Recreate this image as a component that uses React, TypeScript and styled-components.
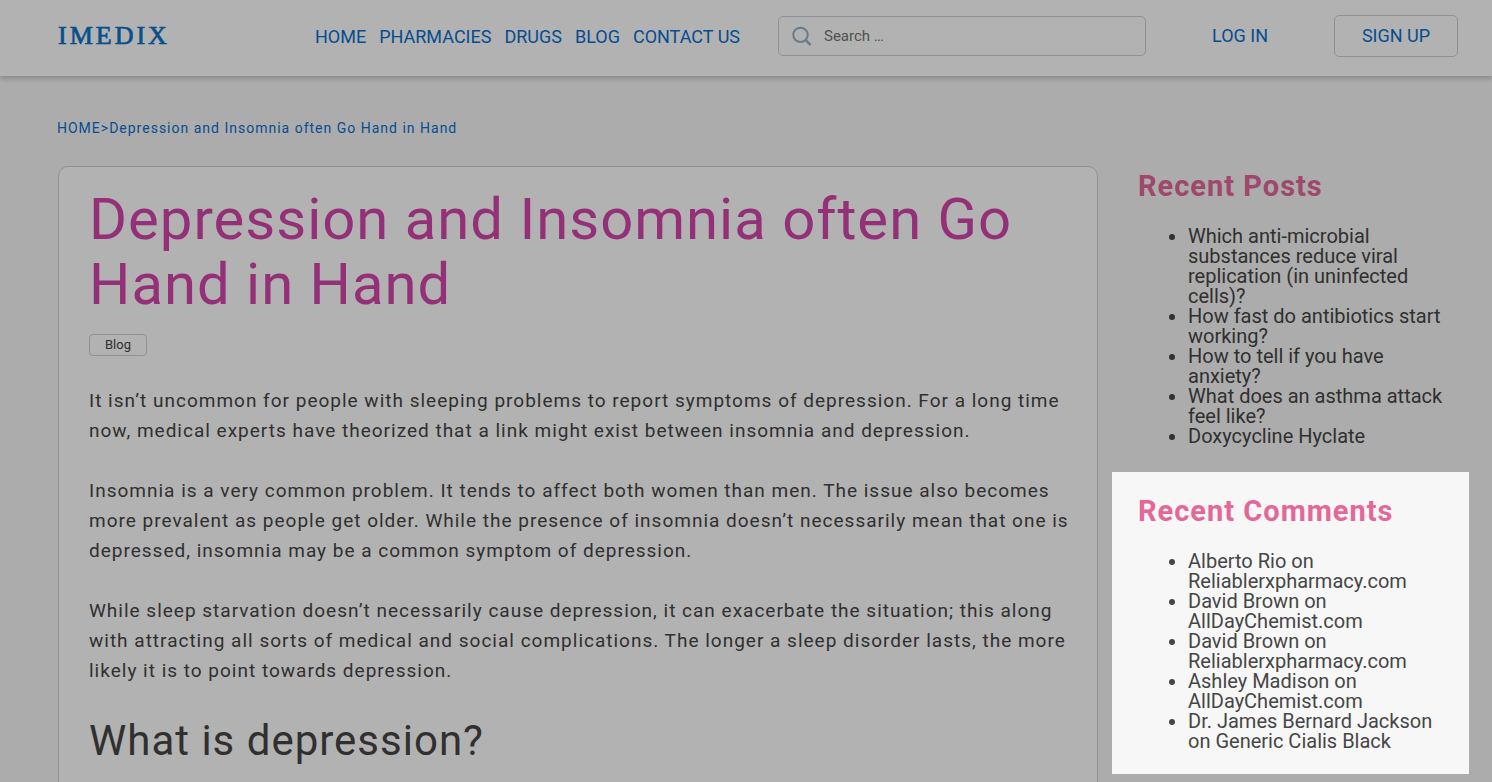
import React from "react";
import styled, { createGlobalStyle } from "styled-components";

const GlobalStyle = createGlobalStyle`
  *, *::before, *::after { box-sizing: border-box; }
  body {
    margin: 0;
    background: #f7f7f7;
    color: #464646;
    font-family: Roboto, "Liberation Sans", sans-serif;
    font-size: 20px;
    overflow: hidden;
  }
  a { color: inherit; text-decoration: none; }
`;

const Page = styled.div`
  min-height: 100vh;
`;

const Header = styled.header`
  display: flex;
  align-items: center;
  height: 76px;
  padding: 0 34px 4px 57px;
  background: #fff;
  box-shadow: 0 3px 5px rgba(0, 0, 0, 0.2);
  color: #0a6fd0;
`;

const Logo = styled.a`
  display: flex;
  width: 258px;
  flex: none;
`;

const Nav = styled.nav`
  display: flex;
  gap: 13px;
  flex: none;
  margin-right: 38px;
  padding-top: 2px;
  font-size: 18px;
  line-height: 22px;
`;

const SearchBox = styled.label`
  display: flex;
  align-items: center;
  gap: 12px;
  flex: 1;
  height: 40px;
  padding: 0 13px;
  border: 1px solid #cdcfdd;
  border-radius: 5px;
`;

const SearchInput = styled.input`
  flex: 1;
  min-width: 0;
  padding: 0;
  border: 0;
  outline: 0;
  background: transparent;
  font: 15px/20px Roboto, "Liberation Sans", sans-serif;
  color: #464646;
  &::placeholder { color: #757575; opacity: 1; }
`;

const AuthLinks = styled.div`
  display: flex;
  flex: none;
  gap: 32px;
  margin-left: 32px;
`;

const AuthButton = styled.button<{ $outlined?: boolean }>`
  height: 42px;
  min-width: 124px;
  padding: 0 25px;
  border: 1px solid ${(p) => (p.$outlined ? "#cdcfdd" : "transparent")};
  border-radius: 5px;
  background: transparent;
  color: inherit;
  font: 18px/22px Roboto, "Liberation Sans", sans-serif;
`;

const Breadcrumb = styled.nav`
  padding: 42px 57px 28px;
  font-size: 14px;
  line-height: 20px;
  letter-spacing: 1px;
  color: #0a6fd0;
`;

const Columns = styled.div`
  display: grid;
  grid-template-columns: minmax(0, 1fr) 357px;
  gap: 14px;
  padding: 0 23px 0 58px;
`;

const Article = styled.article`
  padding: 20px 24px 60px 30px;
  border: 1px solid #cdcfdd;
  border-radius: 10px;
  background: #fff;
  letter-spacing: 1px;
`;

const Title = styled.h1`
  margin: 0 0 17px;
  font-size: 58px;
  font-weight: 400;
  line-height: 65px;
  color: #d345ab;
`;

const Tag = styled.a`
  display: block;
  width: fit-content;
  padding: 0 15px;
  border: 1px solid #cdcfdd;
  border-radius: 4px;
  font-size: 13px;
  line-height: 20px;
  letter-spacing: normal;
`;

const Paragraph = styled.p`
  margin: 30px 0;
  font-size: 19px;
  line-height: 30px;
`;

const Subtitle = styled.h2`
  margin: 0;
  font-size: 42px;
  font-weight: 400;
  line-height: 50px;
`;

const Sidebar = styled.aside`
  display: flex;
  flex-direction: column;
`;

const Widget = styled.section<{ $spotlight?: boolean }>`
  position: relative;
  padding: ${(p) => (p.$spotlight ? "21px 26px 23px" : "2px 26px 26px")};
  /* the spread dims everything outside the highlighted widget */
  box-shadow: ${(p) => (p.$spotlight ? "0 0 0 3000px rgba(0, 0, 0, 0.3)" : "none")};
`;

const WidgetTitle = styled.h3`
  margin: 0 0 22px;
  font-size: 29px;
  font-weight: 700;
  line-height: 36px;
  letter-spacing: 1px;
  color: #e4679a;
`;

const List = styled.ul`
  margin: 0;
  padding: 0 0 0 50px;
  line-height: 20px;
`;

const navItems = ["HOME", "PHARMACIES", "DRUGS", "BLOG", "CONTACT US"];

const posts = [
  "Which anti-microbial substances reduce viral replication (in uninfected cells)?",
  "How fast do antibiotics start working?",
  "How to tell if you have anxiety?",
  "What does an asthma attack feel like?",
  "Doxycycline Hyclate",
];

const comments = [
  { author: "Alberto Rio", target: "Reliablerxpharmacy.com" },
  { author: "David Brown", target: "AllDayChemist.com" },
  { author: "David Brown", target: "Reliablerxpharmacy.com" },
  { author: "Ashley Madison", target: "AllDayChemist.com" },
  { author: "Dr. James Bernard Jackson", target: "Generic Cialis Black" },
];

const paragraphs = [
  "It isn’t uncommon for people with sleeping problems to report symptoms of depression. For a long time now, medical experts have theorized that a link might exist between insomnia and depression.",
  "Insomnia is a very common problem. It tends to affect both women than men. The issue also becomes more prevalent as people get older. While the presence of insomnia doesn’t necessarily mean that one is depressed, insomnia may be a common symptom of depression.",
  "While sleep starvation doesn’t necessarily cause depression, it can exacerbate the situation; this along with attracting all sorts of medical and social complications. The longer a sleep disorder lasts, the more likely it is to point towards depression.",
];

export default function App() {
  return (
    <>
      <GlobalStyle />
      <Page>
        <Header>
          <Logo href="#" aria-label="IMEDIX home">
            <svg width="120" height="32" viewBox="0 0 120 32">
              <text
                x="1"
                y="24"
                fontFamily="Liberation Serif, serif"
                fontSize="26"
                letterSpacing="3"
                fill="#0a74c8"
                stroke="#0a74c8"
                strokeWidth="0.7"
              >
                IMEDIX
              </text>
            </svg>
          </Logo>
          <Nav aria-label="Main">
            {navItems.map((item) => (
              <a key={item} href="#">{item}</a>
            ))}
          </Nav>
          <SearchBox>
            <svg width="20" height="20" viewBox="0 0 20 20" fill="none" stroke="#9bb0c4" strokeWidth="2">
              <circle cx="8.5" cy="8.9" r="7.2" />
              <path d="M13.4 13.8 L18.6 19" strokeWidth="2.6" />
            </svg>
            <SearchInput type="search" placeholder="Search …" aria-label="Search" />
          </SearchBox>
          <AuthLinks>
            <AuthButton type="button">LOG IN</AuthButton>
            <AuthButton type="button" $outlined>SIGN UP</AuthButton>
          </AuthLinks>
        </Header>
        <Breadcrumb aria-label="Breadcrumb">
          <a href="#">HOME</a>&gt;<a href="#">Depression and Insomnia often Go Hand in Hand</a>
        </Breadcrumb>
        <Columns>
          <Article>
            <Title>Depression and Insomnia often Go Hand in Hand</Title>
            <Tag href="#">Blog</Tag>
            {paragraphs.map((text) => (
              <Paragraph key={text}>{text}</Paragraph>
            ))}
            <Subtitle>What is depression?</Subtitle>
          </Article>
          <Sidebar>
            <Widget>
              <WidgetTitle>Recent Posts</WidgetTitle>
              <List>
                {posts.map((post) => (
                  <li key={post}><a href="#">{post}</a></li>
                ))}
              </List>
            </Widget>
            <Widget $spotlight>
              <WidgetTitle>Recent Comments</WidgetTitle>
              <List>
                {comments.map((c) => (
                  <li key={c.author + c.target}>
                    {c.author} on <a href="#">{c.target}</a>
                  </li>
                ))}
              </List>
            </Widget>
          </Sidebar>
        </Columns>
      </Page>
    </>
  );
}
